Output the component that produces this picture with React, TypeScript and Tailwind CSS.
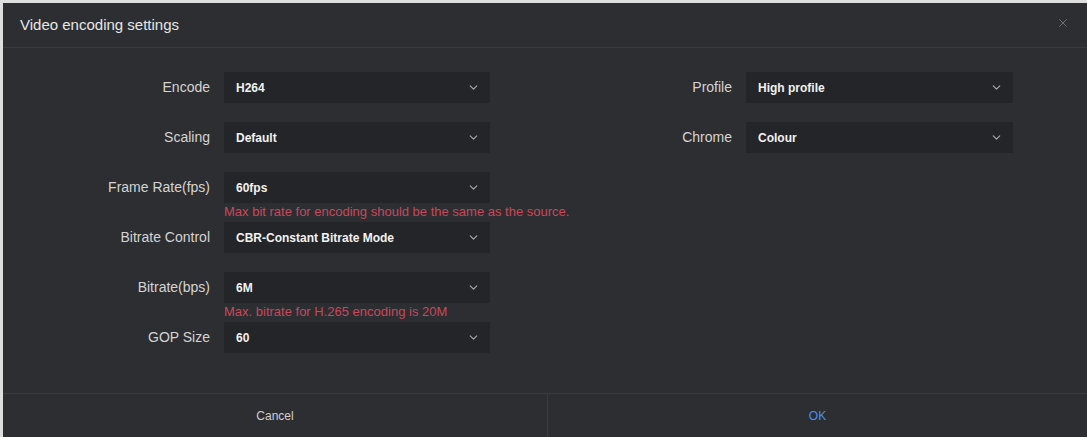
import React from 'react';
import { ChevronDown, X } from 'lucide-react';

type Field = { label: string; value: string; hint?: string };

const leftFields: Field[] = [
  { label: 'Encode', value: 'H264' },
  { label: 'Scaling', value: 'Default' },
  { label: 'Frame Rate(fps)', value: '60fps', hint: 'Max bit rate for encoding should be the same as the source.' },
  { label: 'Bitrate Control', value: 'CBR-Constant Bitrate Mode' },
  { label: 'Bitrate(bps)', value: '6M', hint: 'Max. bitrate for H.265 encoding is 20M' },
  { label: 'GOP Size', value: '60' },
];

const rightFields: Field[] = [
  { label: 'Profile', value: 'High profile' },
  { label: 'Chrome', value: 'Colour' },
];

function SelectRow({ field, labelWidth, selectWidth }: { field: Field; labelWidth: string; selectWidth: string }) {
  return (
    <div className="h-[50px]">
      <div className="flex items-center gap-[14px]">
        <div className={`${labelWidth} shrink-0 text-right text-[14px] text-[#d4d4d4]`}>{field.label}</div>
        <div className={`${selectWidth} flex h-[31px] items-center justify-between bg-[#242528] pl-[12px] pr-[10px]`}>
          <span className="text-[12px] font-bold text-[#f2f2f2]">{field.value}</span>
          <ChevronDown size={13} strokeWidth={2.2} className="text-[#a8a8a8]" />
        </div>
      </div>
      {field.hint && (
        <div className="flex gap-[14px]">
          <div className={`${labelWidth} shrink-0`} />
          <div className="whitespace-nowrap pt-[2px] text-[13px] leading-[14px] text-[#c9485c]">{field.hint}</div>
        </div>
      )}
    </div>
  );
}

export default function App() {
  return (
    <div className="h-[437px] w-[1087px] bg-[#dedede] pl-[3px] pt-[3px]" style={{ fontFamily: '"Liberation Sans", Arial, sans-serif' }}>
      <div className="flex h-full flex-col bg-[#2c2e31]">
        {/* header */}
        <div className="flex h-[45px] shrink-0 items-center justify-between border-b border-[#393b3f] pl-[17px] pr-[17px]">
          <span className="text-[15px] text-[#e6e6e6]">Video encoding settings</span>
          <X size={14} strokeWidth={1.5} className="-mt-[4px] text-[#75777b]" />
        </div>

        {/* body */}
        <div className="flex flex-1 pt-[24px]">
          <div className="w-[543px] shrink-0">
            {leftFields.map((f) => (
              <SelectRow key={f.label} field={f} labelWidth="w-[207px]" selectWidth="w-[266px]" />
            ))}
          </div>
          <div className="flex-1">
            {rightFields.map((f) => (
              <SelectRow key={f.label} field={f} labelWidth="w-[186px]" selectWidth="w-[267px]" />
            ))}
          </div>
        </div>

        {/* footer */}
        <div className="flex h-[44px] shrink-0 border-t border-[#393b3f]">
          <button className="flex w-[544px] items-center justify-center text-[12px] text-[#d0d0d0]">Cancel</button>
          <button className="flex flex-1 items-center justify-center border-l border-[#393b3f] text-[12px] text-[#4a8ef0]">OK</button>
        </div>
      </div>
    </div>
  );
}
